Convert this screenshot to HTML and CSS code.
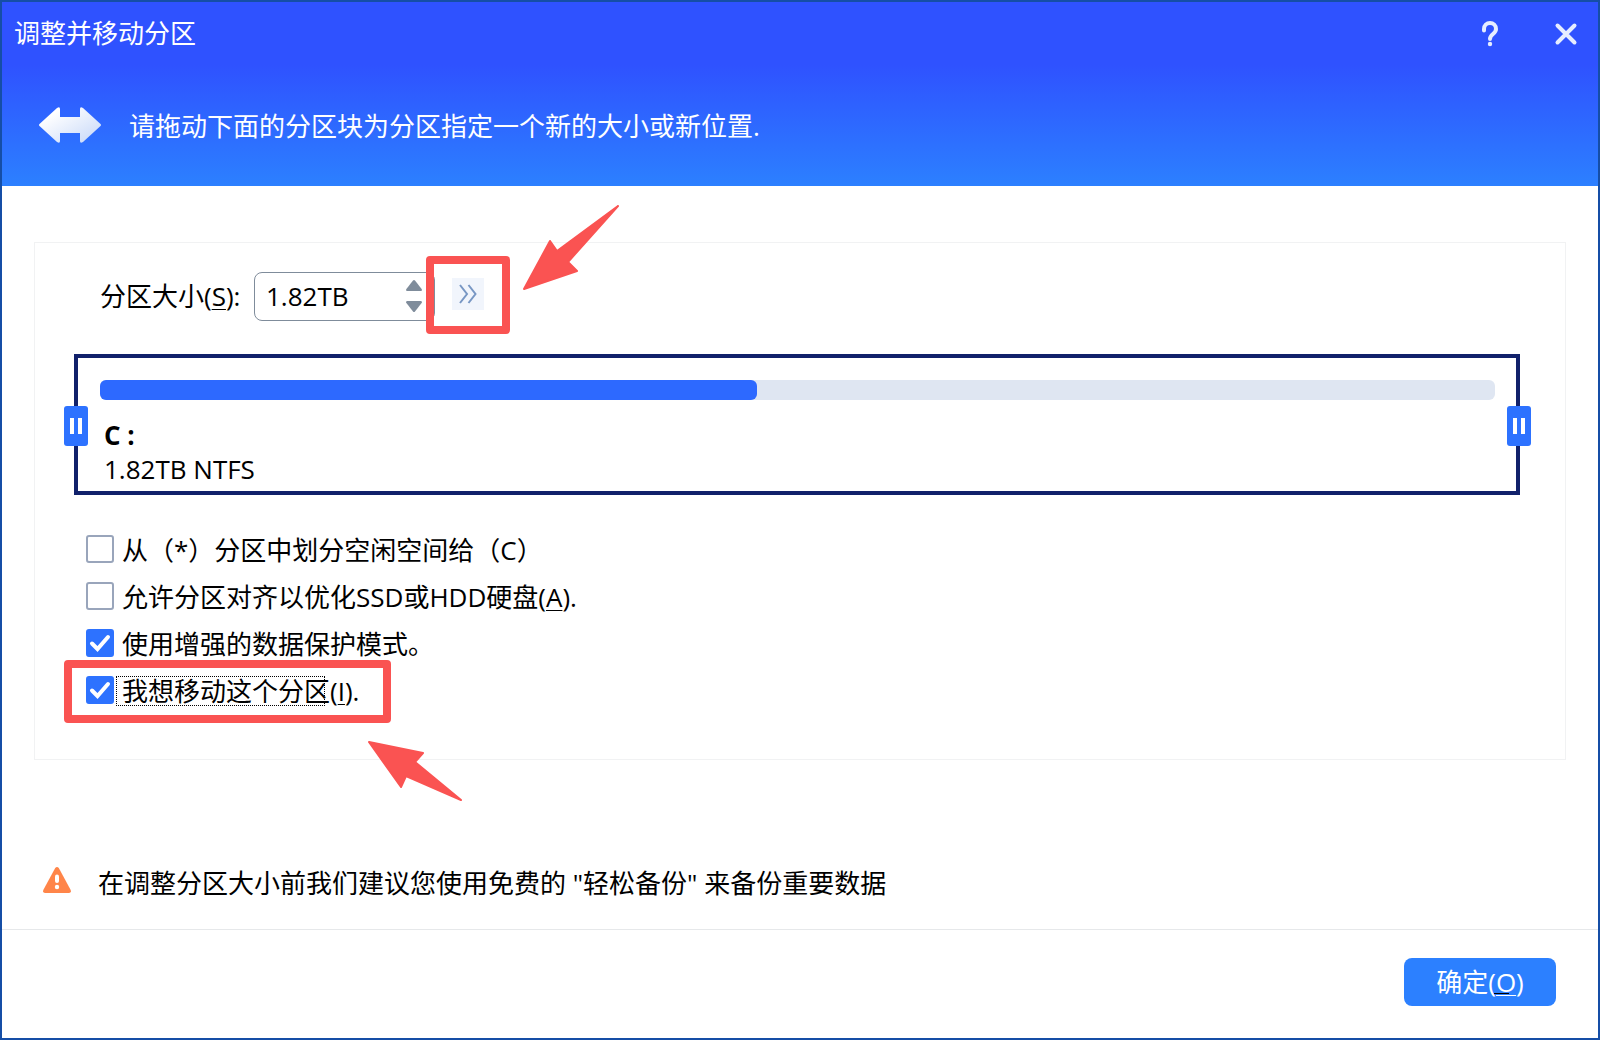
FILE: index.html
```html
<!DOCTYPE html>
<html lang="zh-CN">

<head>
  <meta charset="utf-8">
  <title>调整并移动分区</title>
  <link rel="stylesheet" href="styles.css">
</head>

<body>

  <header class="header">
    <div class="titlebar">
      <h1>调整并移动分区</h1>
      <button type="button" class="title-btn" aria-label="帮助">
        <svg width="24" height="30" viewBox="0 0 24 30">
          <path d="M6 11.500V10a6 6 0 0 1 12 0c0 5-6 5-6 10" />
          <circle cx="12" cy="25" r="2.200" />
        </svg>
      </button>
      <button type="button" class="title-btn" aria-label="关闭">
        <svg width="24" height="30" viewBox="0 0 24 30">
          <path d="M3.500 6.500l17 17M20.500 6.500l-17 17" />
        </svg>
      </button>
    </div>
    <div class="intro">
      <svg width="62" height="36" viewBox="0 0 62 36">
        <defs>
          <linearGradient id="arrowFill" x1="0" y1="0" x2="1" y2="1">
            <stop offset="0.200" stop-color="#fff" />
            <stop offset="1" stop-color="#c4d6f8" />
          </linearGradient>
        </defs>
        <path fill="url(#arrowFill)" d="M.500 17L18 1q3-2 3 1v8h20V2q0-3 3-1l17.500 16q1 1 0 2L44 35q-3 2-3-1v-8H21v8q0 3-3 1L.500 19q-1-1 0-2z" />
      </svg>
      <p>请拖动下面的分区块为分区指定一个新的大小或新位置.</p>
    </div>
  </header>

  <main class="content">
    <section class="panel">
      <div class="size-row">
        <label for="size">分区大小(<u>S</u>):</label>
        <div class="spinner">
          <input type="text" id="size" value="1.82TB">
          <div class="spinner-buttons">
            <button type="button" aria-label="增大"><svg width="16" height="11" viewBox="0 0 16 11"><path d="M7 .500q1-1 2 0l7 9q0 1.500-1 1.500H1q-1 0-1-1.500z" /></svg></button>
            <button type="button" aria-label="减小"><svg width="16" height="11" viewBox="0 0 16 11"><path d="M7 10.500q1 1 2 0l7-9Q16 0 15 0H1Q0 0 0 1.500z" /></svg></button>
          </div>
        </div>
        <div class="callout callout-more">
          <button type="button" class="more" aria-label="更多">
            <svg width="18" height="20" viewBox="0 0 18 20"><path d="M1 1l7 9-7 9M9.500 1l7 9-7 9" /></svg>
          </button>
          <svg class="pointer pointer-more" width="96" height="86" viewBox="0 0 96 86">
            <path d="M1 84L27 36l7 10L95 1 45 57l9 9z" />
          </svg>
        </div>
      </div>

      <div class="partition">
        <button type="button" class="handle handle-left" aria-label="左边界"></button>
        <div class="usage"><div class="usage-fill" style="width: 47.1%"></div></div>
        <strong>C :</strong>
        <span>1.82TB NTFS</span>
        <button type="button" class="handle handle-right" aria-label="右边界"></button>
      </div>

      <div class="options">
        <div class="option">
          <input type="checkbox" id="opt1">
          <label for="opt1">从（*）分区中划分空闲空间给（C）</label>
        </div>
        <div class="option">
          <input type="checkbox" id="opt2">
          <label for="opt2">允许分区对齐以优化SSD或HDD硬盘(<u>A</u>).</label>
        </div>
        <div class="option">
          <input type="checkbox" id="opt3" checked>
          <label for="opt3">使用增强的数据保护模式。</label>
        </div>
        <div class="option callout callout-move">
          <input type="checkbox" id="opt4" checked>
          <label for="opt4" class="focused">我想移动这个分区(<u>I</u>).</label>
          <svg class="pointer pointer-move" width="96" height="62" viewBox="0 0 96 62">
            <path d="M1 1l54 11-8 9 46 38-55-24-5 11z" />
          </svg>
        </div>
      </div>
    </section>

    <div class="warning">
      <svg width="28" height="26" viewBox="0 0 28 26">
        <path fill="#ff8549" d="M12.200 1q1.800-2 3.600 0L27.700 23q.8 3-1.700 3H2q-2.500 0-1.700-3z" />
        <path stroke="#fff" stroke-width="4" stroke-linecap="round" d="M14 9.500v4.500" />
        <circle fill="#fff" cx="14" cy="20" r="2.200" />
      </svg>
      <p>在调整分区大小前我们建议您使用免费的 "轻松备份" 来备份重要数据</p>
    </div>
  </main>

  <footer class="footer">
    <button type="button" class="ok">确定(<u>O</u>)</button>
  </footer>

</body>

</html>
```

FILE: styles.css
```css
:root {
  --blue: #2d72ff;
  --red: #fa5352;
  --slate: #7f8c9b;
}

* {
  box-sizing: border-box;
}

body {
  display: flex;
  flex-direction: column;
  min-height: 100vh;
  margin: 0;
  border: 2px solid #154ea6;
  background: #fff;
  color: #000;
  font: 26px/36px "Open Sans", "Noto Sans CJK SC", sans-serif;
}

h1,
p {
  margin: 0;
  font-size: 26px;
  font-weight: normal;
}

button {
  padding: 0;
  border: none;
  background: none;
  font: inherit;
}

svg {
  display: block;
  flex: none;
}

u {
  text-decoration-thickness: 1px;
  text-underline-offset: 3px;
}

/* header */
.header {
  height: 184px;
  background: linear-gradient(#2f52ff 34%, #2c80ff);
  color: #fff;
}

.titlebar {
  display: flex;
  align-items: center;
  gap: 52px;
  height: 64px;
  padding: 0 20px 0 12px;
}

.titlebar h1 {
  flex: 1;
  padding-bottom: 2px;
}

.title-btn svg {
  fill: none;
  stroke: #e6edff;
  stroke-width: 4;
  stroke-linecap: round;
}

.title-btn circle {
  fill: #e6edff;
  stroke: none;
}

.intro {
  display: flex;
  align-items: center;
  gap: 28px;
  height: 118px;
  padding-left: 37px;
}

.intro p {
  padding-top: 2px;
}

/* content */
.content {
  flex: 1;
  padding: 56px 32px 28px;
}

.panel {
  padding: 29px 45px 50px 39px;
  border: 1px solid #f1f2f3;
}

.size-row {
  display: flex;
  align-items: center;
  height: 49px;
  margin-left: 26px;
}

.size-row label {
  width: 154px;
  padding-bottom: 2px;
  white-space: nowrap;
}

.spinner {
  display: flex;
  align-items: center;
  width: 181px;
  height: 49px;
  margin-right: 17px;
  padding: 0 12px 2px 11px;
  border: 1px solid var(--slate);
  border-radius: 8px;
}

.spinner input {
  flex: 1;
  min-width: 0;
  padding: 0;
  border: none;
  outline: none;
  background: none;
  font: inherit;
}

.spinner-buttons {
  display: grid;
  gap: 10px;
}

.spinner-buttons svg {
  fill: var(--slate);
}

.more {
  display: grid;
  place-items: center;
  width: 32px;
  height: 32px;
  background: #f1f5fc;
}

.more svg {
  fill: none;
  stroke: #7897c4;
  stroke-width: 2;
}

/* partition block */
.partition {
  position: relative;
  display: flex;
  flex-direction: column;
  margin-top: 33px;
  padding: 22px 21px 5px 22px;
  border: 4px solid #11216b;
}

.partition strong,
.partition span {
  padding-left: 4px;
  line-height: 34px;
}

.usage {
  height: 20px;
  margin-bottom: 18px;
  border-radius: 6px;
  background: #dfe6f2;
}

.usage-fill {
  height: 100%;
  border-radius: 6px;
  background: #2d69ff;
}

.handle {
  position: absolute;
  top: 48px;
  display: flex;
  align-items: center;
  justify-content: center;
  gap: 4px;
  width: 24px;
  height: 40px;
  border-radius: 3px;
  background: var(--blue);
}

.handle::before,
.handle::after {
  content: "";
  width: 4px;
  height: 16px;
  background: #fff;
}

.handle-left {
  left: -14px;
}

.handle-right {
  right: -15px;
}

/* check boxes */
.options {
  display: grid;
  justify-items: start;
  gap: 9px;
  margin: 35px 0 0 12px;
}

.option {
  display: flex;
  align-items: center;
}

.option label {
  padding-top: 2px;
}

.option input {
  appearance: none;
  width: 28px;
  height: 28px;
  margin: 0 8px 0 0;
  border: 2px solid #99a5bb;
  border-radius: 3px;
}

.option input:checked {
  border-color: var(--blue);
  background: var(--blue) url("data:image/svg+xml,%3Csvg xmlns='http://www.w3.org/2000/svg' viewBox='0 0 24 24'%3E%3Cpath d='M4 12.500l5.500 5.500L20 6' fill='none' stroke='white' stroke-width='4' stroke-linecap='round'/%3E%3C/svg%3E");
}

.focused {
  position: relative;
}

.focused::before {
  content: "";
  position: absolute;
  top: 5px;
  left: -6px;
  width: 207px;
  height: 28px;
  border: 1px dotted #000;
}

/* red marks */
.callout {
  position: relative;
}

.callout::after {
  content: "";
  position: absolute;
  border: 8px solid var(--red);
  border-radius: 4px;
  pointer-events: none;
}

.callout-more {
  margin-bottom: 5px;
}

.callout-more::after {
  inset: -22px -26px -24px;
}

.callout-move::after {
  inset: -11px -32px -14px -22px;
}

.pointer {
  position: absolute;
  fill: var(--red);
  stroke: var(--red);
  stroke-width: 2;
  stroke-linejoin: round;
}

.pointer-more {
  left: 71px;
  bottom: 19px;
}

.pointer-move {
  top: 70px;
  left: 282px;
}

.warning {
  display: flex;
  align-items: center;
  gap: 27px;
  margin: 105px 0 0 9px;
}

.warning svg {
  margin-bottom: 6px;
}

/* footer */
.footer {
  display: flex;
  justify-content: flex-end;
  padding: 28px 42px 32px;
  border-top: 1px solid #e6e8ea;
}

.ok {
  width: 152px;
  height: 48px;
  border-radius: 8px;
  background: #2c80ff;
  color: #fff;
}

.ok u {
  position: relative;
}

/* mnemonic shadow under the letter */
.ok u::after {
  content: "";
  position: absolute;
  left: -2px;
  bottom: 6px;
  width: 15px;
  height: 1px;
  background: #000;
}
```
